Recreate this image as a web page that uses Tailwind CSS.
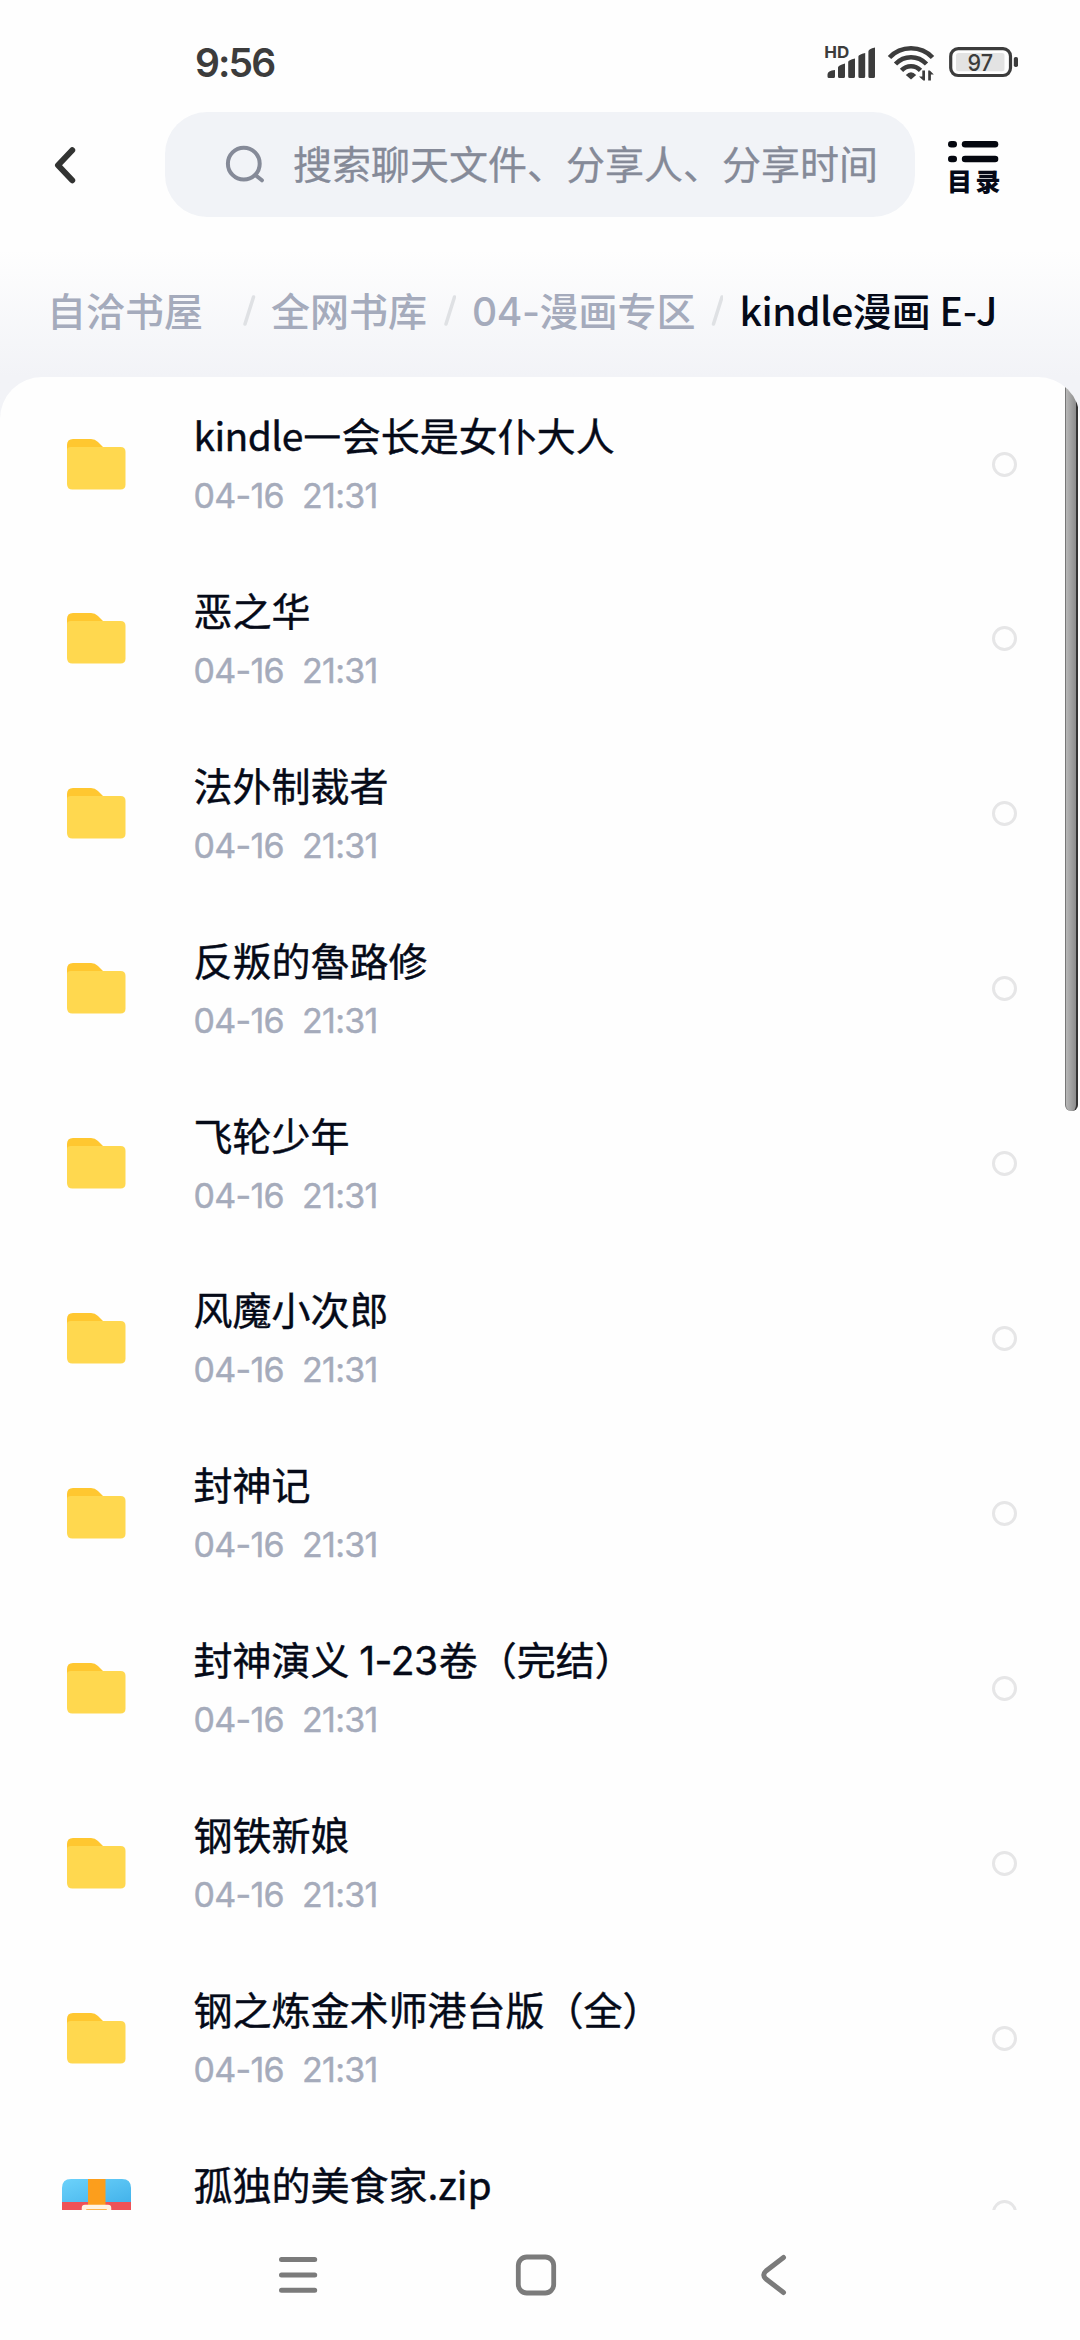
<!DOCTYPE html>
<html lang="zh-CN">
<head>
<meta charset="utf-8">
<title>kindle漫画 E-J</title>
<script src="https://cdn.jsdelivr.net/npm/@tailwindcss/browser@4"></script>
</head>
<body class="flex h-[2340px] w-[1080px] flex-col overflow-hidden bg-[#fefefe] font-['Noto_Sans_CJK_SC',sans-serif] text-[#050a18]">

<!-- Status bar -->
<div class="flex h-[112px] shrink-0 items-start justify-between pl-[195px] pr-[60px] pt-[40px] text-[#3c3c3c]">
  <div class="font-['Inter',sans-serif] text-[39px] font-semibold leading-[46px] tracking-[-1.9px]">9:56</div>
  <svg class="h-[44px] w-[196px]" viewBox="824 40 196 44" fill="currentColor">
    <text x="824.2" y="58" font-family="Inter" font-weight="700" font-size="16.5" textLength="25" lengthAdjust="spacingAndGlyphs">HD</text>
    <path d="M827.5 76.5v-2q0-4 7.500-4.500v6.500q0 1.500-1.500 1.500h-4.500q-1.500 0-1.500-1.500zM838 76.500v-9q0-2 7-4v13q0 1.500-1.500 1.500h-4q-1.500 0-1.500-1.500zM848.200 76.500v-14.500q0-2 6.800-3.500v18q0 1.500-1.500 1.500h-3.800q-1.500 0-1.500-1.500zM858.400 76.500v-20q0-2 6.800-3.500v23.500q0 1.500-1.500 1.500h-3.800q-1.500 0-1.500-1.500zM868.400 76.500v-25q0-2.500 6.600-4v29q0 1.500-1.500 1.500h-3.600q-1.500 0-1.500-1.500z"/>
    <g fill="none" stroke="currentColor" stroke-width="4.600">
      <path d="M889.500 57.500Q898 48.200 911 48.200T932.500 57.500"/>
      <path d="M895.500 64Q902 57.300 911 57.300T926.500 64"/>
      <path d="M901.500 70.300Q905.500 66.200 911 66.200T920.500 70.300"/>
    </g>
    <path d="M905.800 75Q911 69.500 916.200 75L911 79.500z"/>
    <path d="M922.300 70.500h2.700v10h-1.700l-4.300-4h3.300zM928.200 80.500v-10h1.600l4 4h-2.900v6z"/>
    <rect x="950.700" y="48.700" width="59.800" height="26.800" rx="7.500" fill="none" stroke="currentColor" stroke-width="3.200"/>
    <rect x="956" y="53" width="48.500" height="18.300" rx="2.500" fill="#e3e3e3"/>
    <text x="967.500" y="70.800" font-family="Inter" font-weight="500" font-size="23" textLength="25.500" lengthAdjust="spacingAndGlyphs">97</text>
    <rect x="1013.800" y="57" width="4.200" height="10" rx="1.800"/>
  </svg>
</div>

<!-- Search header -->
<div class="flex h-[106px] shrink-0 items-start">
  <div class="flex h-[105px] w-[165px] items-center pl-[52px]">
    <svg class="h-[42px] w-[26px]" viewBox="52 144 26 42" fill="none" stroke="#323332" stroke-width="6" stroke-linecap="round" stroke-linejoin="round"><path d="M72.200 150.200L58 165.200l14.200 15"/></svg>
  </div>
  <div class="flex h-[105px] w-[750px] items-center rounded-[42px] bg-[#f1f3f7] pl-[59px] text-[#858a98]">
    <svg class="h-[44px] w-[44px]" viewBox="224 142 44 44" fill="none" stroke="currentColor" stroke-width="4" stroke-linecap="round"><circle cx="243.800" cy="162.700" r="15.900"/><path d="M255.300 174l6.600 5.300"/></svg>
    <div class="ml-[25px] whitespace-nowrap pb-[6px] text-[39px] leading-[56px] [-webkit-text-stroke:0.3px]">搜索聊天文件、分享人、分享时间</div>
  </div>
  <div class="ml-[33px] flex w-[60px] flex-col pt-[28px]">
    <svg class="h-[24px] w-[54px]" viewBox="948 140 54 24" fill="#04070f"><rect x="948" y="141" width="9" height="6.500" rx="3.250"/><rect x="961.800" y="141" width="36.500" height="6.500" rx="3.250"/><rect x="948" y="155.700" width="9" height="6.500" rx="3.250"/><rect x="961.800" y="155.700" width="36.500" height="6.500" rx="3.250"/></svg>
    <div class="-ml-[1px] mt-[2px] whitespace-nowrap text-[25px] font-black leading-[28px] tracking-[3.500px]">目录</div>
  </div>
</div>

<!-- Breadcrumb -->
<div class="flex h-[159px] shrink-0 items-start bg-linear-to-b from-[#fefefe] from-20% to-[#f2f3f7] pl-[47px] pt-[63px] text-[39px] font-medium leading-[56px] whitespace-nowrap text-[#a5abbc]">
  <div class="w-[195px]">自洽书屋</div>
  <svg class="mt-[14px] h-[32px] w-[14px]" viewBox="0 0 14 32" stroke="#dfe1e4" stroke-width="3.500" stroke-linecap="round"><path d="M11.500 2L3 29"/></svg>
  <div class="ml-[15px] w-[171px]">全网书库</div>
  <svg class="mt-[14px] h-[32px] w-[14px]" viewBox="0 0 14 32" stroke="#dfe1e4" stroke-width="3.500" stroke-linecap="round"><path d="M12.500 2L4 29"/></svg>
  <div class="ml-[16px] w-[237px]"><span class="font-['Inter',sans-serif] leading-none tracking-[-0.400px]">04-</span>漫画专区</div>
  <svg class="mt-[14px] h-[32px] w-[14px]" viewBox="0 0 14 32" stroke="#dfe1e4" stroke-width="3.500" stroke-linecap="round"><path d="M13 2L4.500 29"/></svg>
  <div class="ml-[16.500px] text-[#050a18]"><span class="tracking-[-0.5px]">kindle</span>漫画 E-J</div>
</div>

<!-- File list; the grey band keeps its colour behind the card's round corners -->
<div class="h-[1833px] shrink-0 bg-linear-to-b from-[#f2f3f7] from-[44px] to-[#fefefe] to-[44px]">
  <div class="relative h-full overflow-hidden rounded-t-[42px] bg-[#fefefe]">
    <div id="list"></div>
    <div class="absolute left-[1065px] top-[-20px] h-[754px] w-[13px] rounded-b-[6px] border-l border-r-2 border-l-[#777] border-r-[#333] bg-linear-to-r from-[#b8b8b8] to-[#8c8c8c]"></div>
  </div>
</div>

<!-- System navigation -->
<div class="flex flex-1 items-start pl-[276px] pt-[41px] text-[#7b7b7b]">
  <svg class="h-[48px] w-[44px]" viewBox="276 2251 44 48" stroke="currentColor" stroke-width="5" stroke-linecap="round"><path d="M281.500 2259.500h33.200M281.500 2275h33.200M281.500 2290.300h33.200"/></svg>
  <svg class="ml-[192px] h-[48px] w-[48px]" viewBox="512 2251 48 48" fill="none" stroke="currentColor" stroke-width="4.800"><rect x="518.300" y="2257" width="35.400" height="36" rx="8.500"/></svg>
  <svg class="ml-[198px] h-[48px] w-[34px]" viewBox="758 2251 34 48" fill="none" stroke="currentColor" stroke-width="5" stroke-linecap="round"><path d="M783.500 2257.500L766 2271q-4.500 4 0 8l17.500 13.500"/></svg>
</div>

<script>
const names = [
  '<span class="tracking-[-0.600px]">kindle</span><span class="[-webkit-text-stroke:1.500px]">—</span>会长是女仆大人', '恶之华', '法外制裁者', '反叛的魯路修', '飞轮少年', '风魔小次郎', '封神记',
  '封神演义 <span class="ml-[1px] mr-[1px] font-[\'Inter\',sans-serif] leading-none tracking-[-0.500px]">1-23</span>卷（完结）',
  '钢铁新娘', '钢之炼金术师港台版（全）', '孤独的美食家.zip'
];
const folder = '<svg class="ml-[67px] mt-[61.500px] h-[51px] w-[59px]" viewBox="0 0 59 51"><path d="M0 20V6Q0 0 6 0H24Q28 0 31 3L37 9V20z" fill="#ffc730"/><path d="M0 11Q0 8 4 8H53.500Q58.500 8 58.500 13V45.500Q58.500 50.500 53.500 50.500H5.500Q0 50.500 0 45z" fill="#ffd84f"/></svg>';
const zip = '<svg class="ml-[62px] mt-[53px] h-[70px] w-[69px]" viewBox="0 0 69 70"><defs><linearGradient id="b" x1="0" y1="0" x2="1" y2="1"><stop stop-color="#6cd2fb"/><stop offset="1" stop-color="#43b2ea"/></linearGradient></defs><path d="M0 24V9Q0 0 9 0H60Q69 0 69 9V24z" fill="url(#b)"/><path d="M0 23H69V46H0z" fill="#ee5257"/><path d="M0 46H69V61Q69 70 60 70H9Q0 70 0 61z" fill="#35c48d"/><path d="M26 0H43.500V70H26z" fill="#fc9e1c"/><rect x="22" y="28" width="25" height="18" rx="1" fill="#fc9e1c" stroke="#fff3e2" stroke-width="4.500"/></svg>';
// The last row is cut by the bottom of the list before its date line.
document.getElementById('list').innerHTML = names.map((n, i) => `
  <div class="flex h-[174.900px] items-start">
    <div class="w-[193.500px] shrink-0">${i === 10 ? zip : folder}</div>
    <div class="flex-1 pt-[29px] whitespace-nowrap">
      <div class="h-[56px] text-[39px] leading-[56px] [-webkit-text-stroke:0.400px]">${n}</div>
      ${i === 10 ? '' : `<div class="mt-[12px] flex h-[44px] font-['Inter',sans-serif] text-[34px] leading-[44px] tracking-[-0.700px] text-[#a5abbb] [-webkit-text-stroke:0.400px]"><span class="w-[108.500px]">04-16</span><span>21:31</span></div>`}
    </div>
    <div class="mr-[63px] mt-[74.500px] size-[25px] rounded-full border-[3px] border-[#e6e6e7]"></div>
  </div>`).join('');
</script>
</body>
</html>
